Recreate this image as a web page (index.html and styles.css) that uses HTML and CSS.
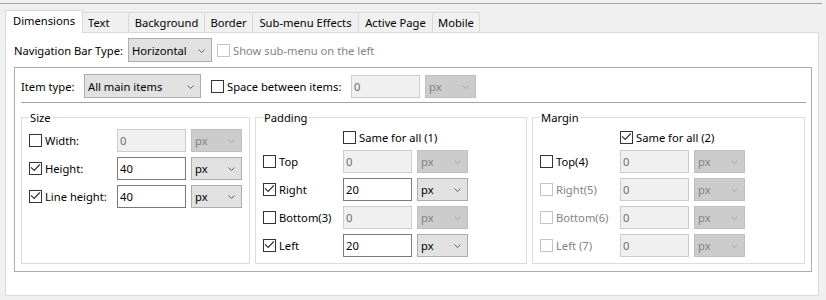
FILE: index.html
```html
<!DOCTYPE html>
<html>
<head>
<meta charset="utf-8">
<link rel="stylesheet" href="styles.css">
</head>
<body>
<div class="topline"></div>
<div class="tabs">
  <div class="tab active t-dim">Dimensions</div>
  <div class="tab t-text">Text</div>
  <div class="tab t-bg">Background</div>
  <div class="tab t-border">Border</div>
  <div class="tab t-sub">Sub-menu Effects</div>
  <div class="tab t-active">Active Page</div>
  <div class="tab t-mobile">Mobile</div>
</div>
<div class="panel">
  <div class="navrow">
    <span class="navlbl">Navigation Bar Type:</span>
    <div class="select nav-sel"><span>Horizontal</span><svg class="chev" width="7" height="4" viewBox="0 0 7 4"><path d="M0.5 0.5 L3.5 3.5 L6.5 0.5" /></svg></div>
    <label class="chk disabled navchk"><span class="box"></span><span>Show sub-menu on the left</span></label>
  </div>
  <div class="outer">
    <div class="itemrow">
      <span class="itemlbl">Item type:</span>
      <div class="select item-sel"><span>All main items</span><svg class="chev" width="7" height="4" viewBox="0 0 7 4"><path d="M0.5 0.5 L3.5 3.5 L6.5 0.5" /></svg></div>
      <label class="chk spacechk"><span class="box"></span><span>Space between items:</span></label>
      <div class="input disabled">0</div>
      <div class="select unit disabled"><span>px</span><svg class="chev" width="7" height="4" viewBox="0 0 7 4"><path d="M0.5 0.5 L3.5 3.5 L6.5 0.5" /></svg></div>
    </div>
    <div class="sep"></div>
    <div class="groups">
      <fieldset class="grp g-size">
        <legend>Size</legend>
        <div class="grid grid-size">
          <label class="chk"><span class="box"></span><span>Width:</span></label>
          <div class="input disabled">0</div>
          <div class="select unit disabled"><span>px</span><svg class="chev" width="7" height="4" viewBox="0 0 7 4"><path d="M0.5 0.5 L3.5 3.5 L6.5 0.5" /></svg></div>

          <label class="chk"><span class="box"><svg class="ck" width="11" height="11" viewBox="0 0 11 11"><path d="M1 4.3 L4.2 7.5 L9.8 1.5" /></svg></span><span>Height:</span></label>
          <div class="input">40</div>
          <div class="select unit"><span>px</span><svg class="chev" width="7" height="4" viewBox="0 0 7 4"><path d="M0.5 0.5 L3.5 3.5 L6.5 0.5" /></svg></div>

          <label class="chk"><span class="box"><svg class="ck" width="11" height="11" viewBox="0 0 11 11"><path d="M1 4.3 L4.2 7.5 L9.8 1.5" /></svg></span><span>Line height:</span></label>
          <div class="input">40</div>
          <div class="select unit"><span>px</span><svg class="chev" width="7" height="4" viewBox="0 0 7 4"><path d="M0.5 0.5 L3.5 3.5 L6.5 0.5" /></svg></div>
        </div>
      </fieldset>

      <fieldset class="grp g-pad">
        <legend>Padding</legend>
        <div class="same">
          <label class="chk"><span class="box"></span><span>Same for all (1)</span></label>
        </div>
        <div class="grid grid-pm">
          <label class="chk"><span class="box"></span><span>Top</span></label>
          <div class="input disabled">0</div>
          <div class="select unit disabled"><span>px</span><svg class="chev" width="7" height="4" viewBox="0 0 7 4"><path d="M0.5 0.5 L3.5 3.5 L6.5 0.5" /></svg></div>

          <label class="chk"><span class="box"><svg class="ck" width="11" height="11" viewBox="0 0 11 11"><path d="M1 4.3 L4.2 7.5 L9.8 1.5" /></svg></span><span>Right</span></label>
          <div class="input">20</div>
          <div class="select unit"><span>px</span><svg class="chev" width="7" height="4" viewBox="0 0 7 4"><path d="M0.5 0.5 L3.5 3.5 L6.5 0.5" /></svg></div>

          <label class="chk"><span class="box"></span><span>Bottom(3)</span></label>
          <div class="input disabled">0</div>
          <div class="select unit disabled"><span>px</span><svg class="chev" width="7" height="4" viewBox="0 0 7 4"><path d="M0.5 0.5 L3.5 3.5 L6.5 0.5" /></svg></div>

          <label class="chk"><span class="box"><svg class="ck" width="11" height="11" viewBox="0 0 11 11"><path d="M1 4.3 L4.2 7.5 L9.8 1.5" /></svg></span><span>Left</span></label>
          <div class="input">20</div>
          <div class="select unit"><span>px</span><svg class="chev" width="7" height="4" viewBox="0 0 7 4"><path d="M0.5 0.5 L3.5 3.5 L6.5 0.5" /></svg></div>
        </div>
      </fieldset>

      <fieldset class="grp g-mar">
        <legend>Margin</legend>
        <div class="same">
          <label class="chk"><span class="box"><svg class="ck" width="11" height="11" viewBox="0 0 11 11"><path d="M1 4.3 L4.2 7.5 L9.8 1.5" /></svg></span><span>Same for all (2)</span></label>
        </div>
        <div class="grid grid-pm">
          <label class="chk"><span class="box"></span><span>Top(4)</span></label>
          <div class="input disabled">0</div>
          <div class="select unit disabled"><span>px</span><svg class="chev" width="7" height="4" viewBox="0 0 7 4"><path d="M0.5 0.5 L3.5 3.5 L6.5 0.5" /></svg></div>

          <label class="chk disabled"><span class="box"></span><span>Right(5)</span></label>
          <div class="input disabled">0</div>
          <div class="select unit disabled"><span>px</span><svg class="chev" width="7" height="4" viewBox="0 0 7 4"><path d="M0.5 0.5 L3.5 3.5 L6.5 0.5" /></svg></div>

          <label class="chk disabled"><span class="box"></span><span>Bottom(6)</span></label>
          <div class="input disabled">0</div>
          <div class="select unit disabled"><span>px</span><svg class="chev" width="7" height="4" viewBox="0 0 7 4"><path d="M0.5 0.5 L3.5 3.5 L6.5 0.5" /></svg></div>

          <label class="chk disabled"><span class="box"></span><span>Left (7)</span></label>
          <div class="input disabled">0</div>
          <div class="select unit disabled"><span>px</span><svg class="chev" width="7" height="4" viewBox="0 0 7 4"><path d="M0.5 0.5 L3.5 3.5 L6.5 0.5" /></svg></div>
        </div>
      </fieldset>
    </div>
  </div>
</div>
</body>
</html>
```
FILE: styles.css
```css
* { box-sizing: border-box; }
html, body { margin: 0; padding: 0; }
body {
  background: #f0f0f0;
  font-family: "Noto Sans", "Open Sans", sans-serif;
  font-size: 11.2px;
  line-height: 15px;
  color: #000;
  width: 826px;
  height: 300px;
  overflow: hidden;
}
.topline { margin-top: 3px; height: 1px; width: 822px; background: #a0a0a0; }

.tabs { display: flex; align-items: flex-end; margin-top: 6px; padding-left: 5px; height: 22px; }
.tab {
  height: 20px;
  border: 1px solid #d9d9d9;
  border-bottom: none;
  margin-left: -1px;
  background: #f0f0f0;
  text-align: center;
  line-height: 19px;
  white-space: nowrap;
}
.tab.active {
  height: 23px;
  margin-left: 0;
  margin-bottom: -1px;
  background: #fff;
  position: relative;
  z-index: 1;
  line-height: 20px;
}
.t-dim { width: 78px; }
.t-text { width: 47px; text-align: left; padding-left: 5px; }
.t-bg { width: 77px; }
.t-border { width: 49px; }
.t-sub { width: 107px; }
.t-active { width: 75px; }
.t-mobile { width: 48px; }

.panel {
  margin-left: 5px;
  width: 814px;
  height: 264px;
  border: 1px solid #d9d9d9;
  background: #fff;
  padding: 5px 0 0 8px;
}

.navrow { display: flex; align-items: center; height: 24px; }
.navlbl { width: 114px; white-space: nowrap; }
.nav-sel { width: 84px; height: 24px; }
.navchk { margin-left: 5px; }

.outer {
  margin-top: 5px;
  width: 798px;
  height: 205px;
  border: 1px solid #adadad;
  padding: 6px 5px 0 6px;
}
.itemrow { display: flex; align-items: center; height: 24px; }
.itemlbl { width: 63px; white-space: nowrap; }
.item-sel { width: 117px; height: 24px; }
.spacechk { margin-left: 10px; width: 140px; }
.itemrow .input { width: 69px; }
.itemrow .unit { margin-left: 5px; }
.sep { margin-top: 4px; height: 1px; background: #a0a0a0; }

.groups { display: flex; gap: 5px; margin-top: 7px; }
.grp {
  margin: 0;
  min-width: 0;
  height: 154px;
  border: 1px solid #dcdcdc;
  padding: 4px 7px 0 7px;
}
.grp legend { padding: 0 1px; line-height: 15px; }
.g-size { width: 229px; }
.g-pad { width: 272px; padding-top: 2px; }
.g-mar { width: 273px; padding-top: 2px; }

.grid { display: grid; grid-auto-rows: 23px; row-gap: 5px; column-gap: 5px; align-items: center; }
.grid-size { grid-template-columns: 83px 69px 51px; }
.grid-pm { grid-template-columns: 75px 69px 51px; }
.same { height: 21px; margin-bottom: 2px; padding-left: 80px; display: flex; align-items: center; }

/* checkbox */
.chk { display: flex; align-items: center; gap: 3px; white-space: nowrap; }
.box {
  width: 13px; height: 13px; flex: none;
  border: 1px solid #333;
  background: #fff;
  display: flex;
}
.ck path { fill: none; stroke: #333; stroke-width: 1.2; }
.chk.disabled { color: #838383; }
.chk.disabled .box { border-color: #c4c4c4; }

/* select */
.select {
  display: flex; align-items: center; justify-content: space-between;
  background: #e1e1e1;
  border: 1px solid #adadad;
  padding: 0 6px 0 3px;
  white-space: nowrap;
}
.unit { width: 51px; height: 23px; }
.chev { flex: none; margin-top: 1px; }
.chev path { fill: none; stroke: #606060; stroke-width: 1; }
.select.disabled { background: #cccccc; border-color: #bfbfbf; color: #838383; }
.select.disabled .chev path { stroke: #a6a6a6; }

/* input */
.input {
  width: 69px; height: 23px;
  border: 1px solid #7a7a7a;
  background: #fff;
  padding: 0 2px;
  display: flex; align-items: center;
}
.input.disabled { background: #f0f0f0; border-color: #cccccc; color: #6d6d6d; }
```
